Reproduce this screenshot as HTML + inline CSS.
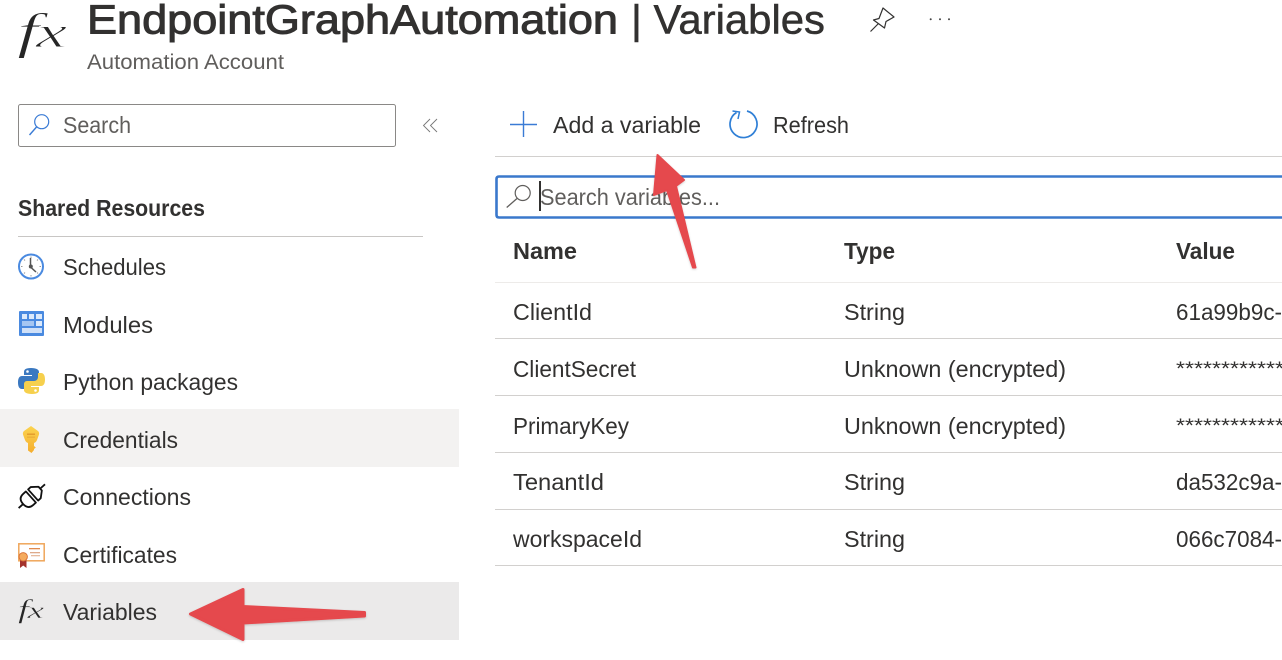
<!DOCTYPE html>
<html><head><meta charset="utf-8"><style>
html,body{margin:0;padding:0;background:#fff;width:1282px;height:660px;overflow:hidden}
svg{display:block}
text{font-family:"Liberation Sans",sans-serif;fill:#323130}
.m{font-size:23px}
.b{font-size:23px;font-weight:bold}
.s{font-family:"Liberation Serif",serif;font-style:italic;fill:#262626}
</style></head><body>
<svg width="1282" height="660" viewBox="0 0 1282 660" xmlns="http://www.w3.org/2000/svg">
<defs>
<linearGradient id="k" x1="0" y1="0" x2="0" y2="1"><stop offset="0" stop-color="#fbd34f"/><stop offset="1" stop-color="#f5ae2e"/></linearGradient>
<filter id="sh" x="-10%" y="-10%" width="120%" height="120%"><feDropShadow dx="0" dy="1" stdDeviation="1" flood-color="#000" flood-opacity=".18"/></filter>
</defs>
<rect width="1282" height="660" fill="#fff"/>
<!-- sidebar highlights -->
<rect x="0" y="409" width="459" height="58" fill="#f3f2f1"/>
<rect x="0" y="582" width="459" height="58" fill="#ebeaea"/>
<!-- header -->
<text class="s" font-size="50" stroke="#fff" stroke-width=".9" transform="translate(17 48) scale(1.600 1)">f</text>
<text x="36" y="47" class="s" font-size="44" stroke="#fff" stroke-width=".9" textLength="31" lengthAdjust="spacingAndGlyphs">x</text>
<text x="87" y="33.500" font-size="41" textLength="531" lengthAdjust="spacingAndGlyphs" stroke="#323130" stroke-width="1">EndpointGraphAutomation</text>
<text x="631" y="33.500" font-size="41" textLength="194" lengthAdjust="spacingAndGlyphs" stroke="#323130" stroke-width=".5">| Variables</text>
<text x="87" y="69" font-size="21" style="fill:#605e5c" textLength="197" lengthAdjust="spacingAndGlyphs">Automation Account</text>
<!-- pin -->
<path d="M870.500 31.500L878.500 23.500M873.500 20L879 18.500L883 8L894 17L886 21.500L884.500 28Z" fill="none" stroke="#323130" stroke-width="1.200" stroke-linejoin="round"/>
<circle cx="930.700" cy="19.300" r="1" fill="#444"/><circle cx="940" cy="19.300" r="1" fill="#444"/><circle cx="949" cy="19.300" r="1" fill="#444"/>
<!-- sidebar search -->
<rect x="18.500" y="104.500" width="377" height="42" rx="2" fill="#fff" stroke="#8a8886"/>
<circle cx="41.700" cy="121.700" r="7" fill="none" stroke="#3a7bd5" stroke-width="1.200"/>
<path d="M36.500 127L29.500 135" stroke="#3a7bd5" stroke-width="1.400"/>
<text x="63" y="133" class="m" style="fill:#605e5c" textLength="68" lengthAdjust="spacingAndGlyphs">Search</text>
<path d="M430 119L423.500 125.500L430 132M437 119L430.500 125.500L437 132" fill="none" stroke="#777" stroke-width=".9"/>
<text x="18" y="216" class="b" textLength="187" lengthAdjust="spacingAndGlyphs">Shared Resources</text>
<rect x="18" y="236" width="405" height="1" fill="#c8c6c4"/>
<!-- schedules icon -->
<circle cx="31" cy="266.500" r="12" fill="#fff" stroke="#4a8ae0" stroke-width="2"/>
<path d="M31 256.500V258M31 275V276.500M21 266.500H22.500M39.500 266.500H41M24 259.500L25 260.500M37 272.500L38 273.500M38 259.500L37 260.500M25 272.500L24 273.500" stroke="#999" stroke-width="1"/>
<path d="M30.500 258V267L36 272" fill="none" stroke="#555" stroke-width="1.500"/>
<circle cx="30.800" cy="266.500" r="2" fill="#555"/>
<text x="63" y="275" class="m" textLength="103" lengthAdjust="spacingAndGlyphs">Schedules</text>
<!-- modules icon -->
<rect x="19" y="311" width="25" height="25" rx="1" fill="#4a8ae0"/>
<rect x="22" y="314" width="5" height="5" fill="#dbe9fb"/><rect x="29" y="314" width="5" height="5" fill="#dbe9fb"/><rect x="36" y="314" width="6" height="5" fill="#dbe9fb"/>
<rect x="22" y="321" width="12" height="5" fill="#a5c6f2"/><rect x="36" y="321" width="6" height="5" fill="#dbe9fb"/>
<rect x="22" y="328" width="20" height="5" fill="#cfe0f8"/>
<text x="63" y="333" class="m" textLength="90" lengthAdjust="spacingAndGlyphs">Modules</text>
<!-- python icon -->
<path d="M31 368c-6 0-7 2-7 4v3h8v1H22c-3 0-4 3-4 6.500s1 6.500 4 6.500h3v-4c0-2.500 2-4 4-4h7c2 0 3-1.500 3-3v-6c0-2-2-4-8-4z" fill="#3a78c0"/>
<path d="M32 394c6 0 7-2 7-4v-3h-8v-1h10c3 0 4-3 4-6.500s-1-6.500-4-6.500h-3v4c0 2.500-2 4-4 4h-7c-2 0-3 1.500-3 3v6c0 2 2 4 8 4z" fill="#f6d04d"/>
<circle cx="27.500" cy="371.500" r="1.300" fill="#fff"/><circle cx="35.500" cy="390.500" r="1.300" fill="#fff"/>
<text x="63" y="390" class="m" textLength="175" lengthAdjust="spacingAndGlyphs">Python packages</text>
<!-- key icon -->
<path d="M31 426L38 431Q39.500 432.500 39 434.500L37.200 439.500Q36.200 442.300 34 443V446L35.800 447.500L34 449V450L31.500 453L28 450.500V443Q25.800 442.300 24.800 439.500L23 434.500Q22.500 432.500 24 431Z" fill="url(#k)"/>
<rect x="27" y="433.500" width="8" height="1.400" fill="#e29a2c"/><rect x="27" y="436.500" width="8" height="1.400" fill="#ecb03a"/>
<text x="63" y="448" class="m" textLength="115" lengthAdjust="spacingAndGlyphs">Credentials</text>
<!-- connections icon -->
<g transform="translate(32 496) rotate(-42)" fill="#fff" stroke="#111" stroke-width="1.800" stroke-linejoin="round">
<path d="M-18 0H-12M11 0H17.500" fill="none"/>
<path d="M-1.500 -7.500H-5Q-12 -7.500 -12 0Q-12 7.500 -5 7.500H-1.500Z"/>
<path d="M1.500 -7.500H5L11 -2.500V2.500L5 7.500H1.500Z"/>
</g>
<text x="63" y="505" class="m" textLength="128" lengthAdjust="spacingAndGlyphs">Connections</text>
<!-- certificates icon -->
<rect x="18.800" y="543.800" width="25.400" height="17" fill="#fff" stroke="#efa65a" stroke-width="1.500"/>
<rect x="29" y="548" width="11" height="1.300" fill="#e08a4e"/><rect x="30" y="552" width="10" height="1.300" fill="#deaa8a"/><rect x="31" y="555" width="9" height="1.300" fill="#e6bca0"/>
<path d="M20 559H26.500V568L23.200 565.500L20 568Z" fill="#a4322c"/>
<circle cx="23.200" cy="556.800" r="4.200" fill="#f5ab5e" stroke="#d9743a" stroke-width="1"/>
<text x="63" y="563" class="m" textLength="114" lengthAdjust="spacingAndGlyphs">Certificates</text>
<!-- variables -->
<text class="s" font-size="26" stroke="#ebeaea" stroke-width=".4" transform="translate(18 618) scale(1.500 1)">f</text>
<text x="27.500" y="618" class="s" font-size="23" stroke="#ebeaea" stroke-width=".4" textLength="16.500" lengthAdjust="spacingAndGlyphs">x</text>
<text x="63" y="620" class="m" textLength="94" lengthAdjust="spacingAndGlyphs">Variables</text>
<!-- toolbar -->
<path d="M510 124.500H537M523.500 111V137" stroke="#3a7bd5" stroke-width="1.400"/>
<text x="553" y="133" class="m" textLength="148" lengthAdjust="spacingAndGlyphs">Add a variable</text>
<path d="M737 112A13.500 13.500 0 1 0 747.500 110.500" fill="none" stroke="#2f7fd6" stroke-width="1.700" transform="translate(-.5 .5)"/>
<path d="M732.500 111L739.500 112L738 119" fill="none" stroke="#2f7fd6" stroke-width="1.500"/>
<text x="773" y="133" class="m" textLength="76" lengthAdjust="spacingAndGlyphs">Refresh</text>
<rect x="495" y="156" width="787" height="1" fill="#d2d0ce"/>
<!-- search vars -->
<path d="M1282 176.500H499Q496.500 176.500 496.500 179V215Q496.500 217.500 499 217.500H1282" fill="#fff" stroke="#3a78cc" stroke-width="2.600"/>
<circle cx="522.700" cy="193" r="7.500" fill="none" stroke="#605e5c" stroke-width="1.200"/>
<path d="M517 198.500L506.700 207.500" stroke="#605e5c" stroke-width="1.300"/>
<text x="540" y="205" class="m" style="fill:#605e5c" textLength="180" lengthAdjust="spacingAndGlyphs">Search variables...</text>
<rect x="539" y="181" width="2" height="30" fill="#323130"/>
<!-- table header -->
<text x="513" y="259" class="b" textLength="64" lengthAdjust="spacingAndGlyphs">Name</text>
<text x="844" y="259" class="b" textLength="51" lengthAdjust="spacingAndGlyphs">Type</text>
<text x="1176" y="259" class="b" textLength="59" lengthAdjust="spacingAndGlyphs">Value</text>
<rect x="495" y="282" width="787" height="1" fill="#edebe9"/>
<rect x="495" y="338" width="787" height="1" fill="#d2d0ce"/>
<rect x="495" y="395" width="787" height="1" fill="#d2d0ce"/>
<rect x="495" y="452" width="787" height="1" fill="#d2d0ce"/>
<rect x="495" y="509" width="787" height="1" fill="#d2d0ce"/>
<rect x="495" y="565" width="787" height="1" fill="#d2d0ce"/>
<!-- rows -->
<text x="513" y="320" class="m" textLength="79" lengthAdjust="spacingAndGlyphs">ClientId</text>
<text x="844" y="320" class="m" textLength="61" lengthAdjust="spacingAndGlyphs">String</text>
<text x="1176" y="320" class="m" textLength="106" lengthAdjust="spacingAndGlyphs">61a99b9c-</text>
<text x="513" y="377" class="m" textLength="123" lengthAdjust="spacingAndGlyphs">ClientSecret</text>
<text x="844" y="377" class="m" textLength="222" lengthAdjust="spacingAndGlyphs">Unknown (encrypted)</text>
<text x="1176" y="375" font-size="19" textLength="108" lengthAdjust="spacingAndGlyphs">************</text>
<text x="513" y="434" class="m" textLength="116" lengthAdjust="spacingAndGlyphs">PrimaryKey</text>
<text x="844" y="434" class="m" textLength="222" lengthAdjust="spacingAndGlyphs">Unknown (encrypted)</text>
<text x="1176" y="432" font-size="19" textLength="108" lengthAdjust="spacingAndGlyphs">************</text>
<text x="513" y="490" class="m" textLength="91" lengthAdjust="spacingAndGlyphs">TenantId</text>
<text x="844" y="490" class="m" textLength="61" lengthAdjust="spacingAndGlyphs">String</text>
<text x="1176" y="490" class="m" textLength="106" lengthAdjust="spacingAndGlyphs">da532c9a-</text>
<text x="513" y="547" class="m" textLength="129" lengthAdjust="spacingAndGlyphs">workspaceId</text>
<text x="844" y="547" class="m" textLength="61" lengthAdjust="spacingAndGlyphs">String</text>
<text x="1176" y="547" class="m" textLength="106" lengthAdjust="spacingAndGlyphs">066c7084-</text>
<!-- arrows -->
<path d="M364.500 612.500L243 606.500L243 589.500L190.500 614L243 639.500L243 623L364.500 616Z" fill="#e5484d" stroke="#e5484d" stroke-width="3" stroke-linejoin="round" filter="url(#sh)"/>
<path d="M657.500 155L684 180L676 186L695.500 267.500L693 267.500L667 190L654 195Z" fill="#e5484d" stroke="#e5484d" stroke-width="2" stroke-linejoin="round" filter="url(#sh)"/>
</svg>
</body></html>
